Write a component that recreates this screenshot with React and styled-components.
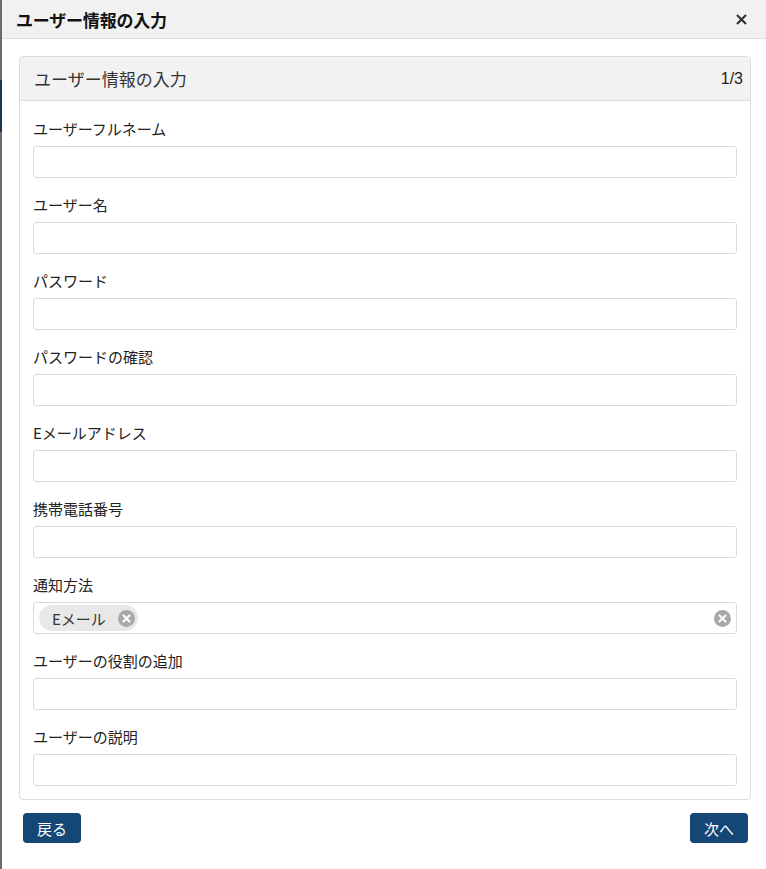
import React from 'react';
import styled, { createGlobalStyle } from 'styled-components';

const GlobalStyle = createGlobalStyle`
  html, body {
    margin: 0;
    padding: 0;
    background: #ffffff;
    font-family: 'Noto Sans CJK JP', 'Liberation Sans', sans-serif;
    color: #222;
  }
`;

const Page = styled.div`
  display: flex;
  width: 766px;
  height: 869px;
  overflow: hidden;
`;

const Backdrop = styled.div`
  width: 2px;
  flex-shrink: 0;
  background: linear-gradient(
    to bottom,
    #6b6b6b 0,
    #6b6b6b 80px,
    #1f3350 80px,
    #1f3350 132px,
    #6b6b6b 132px
  );
`;

const Modal = styled.div`
  flex: 1;
  display: flex;
  flex-direction: column;
  background: #fff;
`;

const ModalHeader = styled.div`
  height: 39px;
  box-sizing: border-box;
  display: flex;
  align-items: center;
  justify-content: space-between;
  padding: 0 18px 0 14px;
  background: #f1f1f1;
  border-bottom: 1px solid #dedede;
`;

const ModalTitle = styled.h1`
  margin: 0;
  font-size: 17px;
  font-weight: 700;
  color: #111;
  letter-spacing: -0.2px;
`;

const CloseButton = styled.button`
  border: 0;
  background: none;
  padding: 0;
  width: 14px;
  height: 14px;
  cursor: pointer;
  display: flex;
  align-items: center;
  justify-content: center;
`;

const ModalBody = styled.div`
  padding: 17px 15px 0 17px;
  display: flex;
  flex-direction: column;
`;

const Panel = styled.section`
  border: 1px solid #dcdcdc;
  border-radius: 4px;
  overflow: hidden;
`;

const PanelHeader = styled.div`
  height: 44px;
  box-sizing: border-box;
  display: flex;
  align-items: center;
  justify-content: space-between;
  padding: 0 7px 0 14px;
  background: #f2f2f2;
  border-bottom: 1px solid #dedede;
`;

const PanelTitle = styled.h2`
  margin: 0;
  font-size: 17px;
  font-weight: 400;
  color: #333;
`;

const Step = styled.span`
  font-family: 'Liberation Sans', sans-serif;
  font-size: 16px;
  color: #222;
`;

const Form = styled.div`
  display: flex;
  flex-direction: column;
  gap: 16px;
  padding: 17px 13px 13px 13px;
`;

const Field = styled.div`
  display: flex;
  flex-direction: column;
  gap: 6px;
`;

const Label = styled.label`
  font-size: 15px;
  line-height: 22px;
  color: #222;
`;

const Input = styled.div`
  height: 32px;
  box-sizing: border-box;
  border: 1px solid #dadada;
  border-radius: 3px;
  background: #fff;
  display: flex;
  align-items: center;
  justify-content: space-between;
  padding: 0 5px;
`;

const Chip = styled.span`
  display: inline-flex;
  align-items: center;
  gap: 12px;
  height: 26px;
  box-sizing: border-box;
  padding: 0 3px 0 13px;
  border-radius: 13px;
  background: #e8e8e8;
  font-size: 15px;
  color: #333;
`;

const ClearIcon = styled.svg`
  width: ${p => p.size}px;
  height: ${p => p.size}px;
  flex-shrink: 0;
`;

const Footer = styled.div`
  display: flex;
  justify-content: space-between;
  padding: 13px 3px 0 4px;
`;

const Button = styled.button`
  height: 30px;
  padding: 0 14px;
  border: 0;
  border-radius: 4px;
  background: #154776;
  color: #fff;
  font-family: 'Noto Sans CJK JP', 'Liberation Sans', sans-serif;
  font-size: 15px;
  cursor: pointer;
`;

const Cross = ({ size }) => (
  <ClearIcon size={size} viewBox="0 0 18 18">
    <circle cx="9" cy="9" r="9" fill="#a9a9a9" />
    <path d="M5.8 5.8 L12.2 12.2 M12.2 5.8 L5.8 12.2" stroke="#fff" strokeWidth="2.2" strokeLinecap="round" />
  </ClearIcon>
);

const fields = [
  'ユーザーフルネーム',
  'ユーザー名',
  'パスワード',
  'パスワードの確認',
  'Eメールアドレス',
  '携帯電話番号',
  '通知方法',
  'ユーザーの役割の追加',
  'ユーザーの説明',
];

const App = () => (
  <>
    <GlobalStyle />
    <Page>
      <Backdrop />
      <Modal>
        <ModalHeader>
          <ModalTitle>ユーザー情報の入力</ModalTitle>
          <CloseButton aria-label="close">
            <svg width="11" height="11" viewBox="0 0 11 11">
              <path d="M1 1 L10 10 M10 1 L1 10" stroke="#333" strokeWidth="2.2" />
            </svg>
          </CloseButton>
        </ModalHeader>
        <ModalBody>
          <Panel>
            <PanelHeader>
              <PanelTitle>ユーザー情報の入力</PanelTitle>
              <Step>1/3</Step>
            </PanelHeader>
            <Form>
              {fields.map(name => (
                <Field key={name}>
                  <Label>{name}</Label>
                  {name === '通知方法' ? (
                    <Input>
                      <Chip>
                        Eメール
                        <Cross size={17} />
                      </Chip>
                      <Cross size={17} />
                    </Input>
                  ) : (
                    <Input />
                  )}
                </Field>
              ))}
            </Form>
          </Panel>
          <Footer>
            <Button>戻る</Button>
            <Button>次へ</Button>
          </Footer>
        </ModalBody>
      </Modal>
    </Page>
  </>
);

export default App;
